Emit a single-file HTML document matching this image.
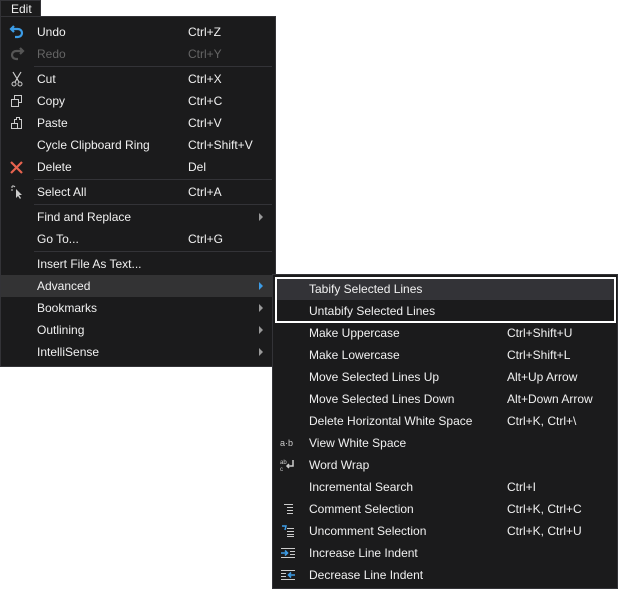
<!DOCTYPE html>
<html><head><style>
*{margin:0;padding:0;box-sizing:border-box}
body{width:619px;height:590px;background:#fff;position:relative;overflow:hidden;font-family:"Liberation Sans",sans-serif;font-size:12px;color:#f1f1f1}
.tab{position:absolute;left:0;top:0;width:41px;height:17px;background:#1b1b1c;border:1px solid #333337;border-bottom:none;padding:1px 0 0 10px;font-size:12px}
.menu{position:absolute;background:#1b1b1c;border:1px solid #333337}
.row{position:absolute;left:0;right:0;height:22px;line-height:22px}
.row .t{position:absolute}
.row .k{position:absolute}
.dis{color:#656565}
.sep{position:absolute;height:1px;background:#333337}
.arr{position:absolute;width:0;height:0;border-left:4px solid #999;border-top:4px solid transparent;border-bottom:4px solid transparent;top:7px}
.ic{position:absolute}
</style></head><body>
<div class="tab">Edit</div>
<div class="menu" style="left:0;top:16px;width:276px;height:351px">
 <div class="row" style="top:4px"><svg class="ic" style="left:8px;top:3px" width="16" height="16"><path d="M5 2 L2 5 L5 8 M2 5 H9 A4 4 0 0 1 9 13 H6" stroke="#3c9ce6" stroke-width="2.2" fill="none"/></svg><span class="t" style="left:36px">Undo</span><span class="k" style="left:187px">Ctrl+Z</span></div>
 <div class="row dis" style="top:26px"><svg class="ic" style="left:8px;top:3px" width="16" height="16"><path d="M11 2 L14 5 L11 8 M14 5 H7 A4 4 0 0 0 7 13 H9" stroke="#555" stroke-width="2.2" fill="none"/></svg><span class="t" style="left:36px">Redo</span><span class="k" style="left:187px">Ctrl+Y</span></div>
 <div class="sep" style="left:33px;right:3px;top:49px"></div>
 <div class="row" style="top:51px"><svg class="ic" style="left:9px;top:3px" width="14" height="16"><path d="M3 1 L9 11 M11 1 L5 11" stroke="#ccc" stroke-width="1.2" fill="none"/><circle cx="4" cy="13" r="2" stroke="#ccc" fill="none"/><circle cx="10" cy="13" r="2" stroke="#ccc" fill="none"/></svg><span class="t" style="left:36px">Cut</span><span class="k" style="left:187px">Ctrl+X</span></div>
 <div class="row" style="top:73px"><svg class="ic" style="left:9px;top:4px" width="14" height="14"><path d="M1.5 5.5h7v7h-7z M4.5 5.5v-4h7v7h-3" stroke="#ccc" fill="none"/></svg><span class="t" style="left:36px">Copy</span><span class="k" style="left:187px">Ctrl+C</span></div>
 <div class="row" style="top:95px"><svg class="ic" style="left:9px;top:4px" width="14" height="14"><path d="M1.5 7.5h6v5h-6z M4.5 7.5v-4h2v-2h3v2h2v9h-4" stroke="#ccc" fill="none"/></svg><span class="t" style="left:36px">Paste</span><span class="k" style="left:187px">Ctrl+V</span></div>
 <div class="row" style="top:117px"><span class="t" style="left:36px">Cycle Clipboard Ring</span><span class="k" style="left:187px">Ctrl+Shift+V</span></div>
 <div class="row" style="top:139px"><svg class="ic" style="left:8px;top:4px" width="15" height="15"><path d="M2 2L13 13M13 2L2 13" stroke="#e8634f" stroke-width="2.2"/></svg><span class="t" style="left:36px">Delete</span><span class="k" style="left:187px">Del</span></div>
 <div class="sep" style="left:33px;right:3px;top:162px"></div>
 <div class="row" style="top:164px"><svg class="ic" style="left:9px;top:3px" width="14" height="16"><path d="M6 5 L6 14 L8 12 L10 15 L11 14 L9 11 L12 11 Z" fill="#ccc"/><path d="M3 1v2M1 3h2M5 2l-1 1M1 6h2" stroke="#ccc"/></svg><span class="t" style="left:36px">Select All</span><span class="k" style="left:187px">Ctrl+A</span></div>
 <div class="sep" style="left:33px;right:3px;top:187px"></div>
 <div class="row" style="top:189px"><span class="t" style="left:36px">Find and Replace</span><span class="arr" style="left:258px"></span></div>
 <div class="row" style="top:211px"><span class="t" style="left:36px">Go To...</span><span class="k" style="left:187px">Ctrl+G</span></div>
 <div class="sep" style="left:33px;right:3px;top:234px"></div>
 <div class="row" style="top:236px"><span class="t" style="left:36px">Insert File As Text...</span></div>
 <div class="row" style="top:258px;background:#333334"><span class="t" style="left:36px">Advanced</span><span class="arr" style="left:258px;border-left-color:#3c9ce6"></span></div>
 <div class="row" style="top:280px"><span class="t" style="left:36px">Bookmarks</span><span class="arr" style="left:258px"></span></div>
 <div class="row" style="top:302px"><span class="t" style="left:36px">Outlining</span><span class="arr" style="left:258px"></span></div>
 <div class="row" style="top:324px"><span class="t" style="left:36px">IntelliSense</span><span class="arr" style="left:258px"></span></div>
</div>
<div class="menu" style="left:272px;top:274px;width:346px;height:315px">
 <div class="row" style="top:3px;left:2px;right:2px;background:#333337"><span class="t" style="left:34px">Tabify Selected Lines</span></div>
 <div class="row" style="top:25px"><span class="t" style="left:36px">Untabify Selected Lines</span></div>
 <div style="position:absolute;left:2px;top:2px;width:341px;height:46px;border:2px solid #fff"></div>
 <div class="row" style="top:47px"><span class="t" style="left:36px">Make Uppercase</span><span class="k" style="left:234px">Ctrl+Shift+U</span></div>
 <div class="row" style="top:69px"><span class="t" style="left:36px">Make Lowercase</span><span class="k" style="left:234px">Ctrl+Shift+L</span></div>
 <div class="row" style="top:91px"><span class="t" style="left:36px">Move Selected Lines Up</span><span class="k" style="left:234px">Alt+Up Arrow</span></div>
 <div class="row" style="top:113px"><span class="t" style="left:36px">Move Selected Lines Down</span><span class="k" style="left:234px">Alt+Down Arrow</span></div>
 <div class="row" style="top:135px"><span class="t" style="left:36px">Delete Horizontal White Space</span><span class="k" style="left:234px">Ctrl+K, Ctrl+\</span></div>
 <div class="row" style="top:157px"><span class="t" style="left:7px;font-size:9px;color:#ccc">a·b</span><span class="t" style="left:36px">View White Space</span></div>
 <div class="row" style="top:179px"><svg class="ic" style="left:7px;top:4px" width="16" height="14"><text x="0" y="6" font-size="6" fill="#ccc" font-family="Liberation Sans">ab</text><text x="0" y="13" font-size="6" fill="#ccc" font-family="Liberation Sans">c</text><path d="M13 2v6h-6M9 6l-2 2 2 2" stroke="#ccc" stroke-width="1.5" fill="none"/></svg><span class="t" style="left:36px">Word Wrap</span></div>
 <div class="row" style="top:201px"><span class="t" style="left:36px">Incremental Search</span><span class="k" style="left:234px">Ctrl+I</span></div>
 <div class="row" style="top:223px"><svg class="ic" style="left:9px;top:5px" width="12" height="12"><path d="M2 1.5h9M5 4.5h6M5 7.5h6M5 10.5h6" stroke="#ccc"/></svg><span class="t" style="left:36px">Comment Selection</span><span class="k" style="left:234px">Ctrl+K, Ctrl+C</span></div>
 <div class="row" style="top:245px"><svg class="ic" style="left:8px;top:5px" width="14" height="12"><path d="M1 1h4l-1 4" stroke="#3c9ce6" stroke-width="1.5" fill="none"/><path d="M6 3.5h7M6 6.5h7M6 9.5h7M6 11.5h7" stroke="#ccc"/></svg><span class="t" style="left:36px">Uncomment Selection</span><span class="k" style="left:234px">Ctrl+K, Ctrl+U</span></div>
 <div class="row" style="top:267px"><svg class="ic" style="left:7px;top:5px" width="16" height="12"><path d="M1 1.5h14M1 10.5h14M10 4.5h5M10 7.5h5" stroke="#ccc"/><path d="M1 6h6M5 3.5l2.5 2.5L5 8.5" stroke="#3c9ce6" stroke-width="1.6" fill="none"/></svg><span class="t" style="left:36px">Increase Line Indent</span></div>
 <div class="row" style="top:289px"><svg class="ic" style="left:7px;top:5px" width="16" height="12"><path d="M1 1.5h14M1 10.5h14M1 4.5h5M1 7.5h5" stroke="#ccc"/><path d="M15 6h-6M11 3.5L8.5 6 11 8.5" stroke="#3c9ce6" stroke-width="1.6" fill="none"/></svg><span class="t" style="left:36px">Decrease Line Indent</span></div>
</div>
</body></html>
